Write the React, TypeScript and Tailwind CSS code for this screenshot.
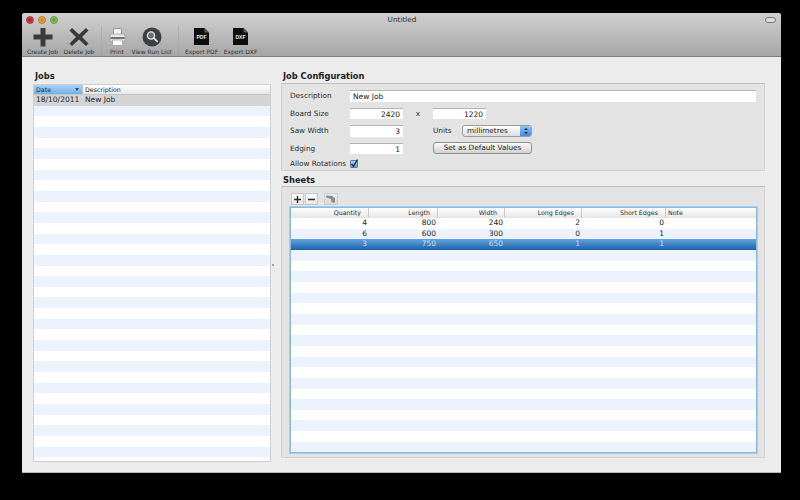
const font = "font-['DejaVu_Sans','Liberation_Sans',sans-serif]";
const sheetCols = "grid grid-cols-[78px_69px_67px_77px_84px_1fr]";

const sheets = [
  [4, 800, 240, 2, 0],
  [6, 600, 300, 0, 1],
  [3, 750, 650, 1, 1],
];

function PlusIcon() {
  return (
    <svg width="20" height="20" viewBox="0 0 20 20">
      <path d="M7.500 1h5v6.500H19.500V12.500H12.500v7h-5v-7H.5V7.500h7z" fill="#3a3b3c" />
    </svg>
  );
}

function CrossIcon() {
  return (
    <svg width="20" height="20" viewBox="0 0 20 20">
      <path d="M3 1l7 6.500L17 1l2.500 2.500L13 10l6.500 6.500L17 19l-7-6.500L3 19 .5 16.500 7 10 .5 3.500z" fill="#37393a" />
    </svg>
  );
}

function PrintIcon() {
  return (
    <svg width="17" height="20" viewBox="0 0 17 20">
      <path d="M4.500 1.500h8v6h-8z" fill="#f2f2f2" stroke="#8a8a8a" strokeWidth=".8" />
      <rect x="1" y="7" width="15" height="7.500" rx="2" fill="#e4e6e8" stroke="#9a9a9a" strokeWidth=".7" />
      <path d="M1.500 11h14" stroke="#4c4f52" strokeWidth="1.600" />
      <path d="M3.500 13h10v5.500h-10z" fill="#fafafa" stroke="#9a9a9a" strokeWidth=".7" />
    </svg>
  );
}

function SearchIcon() {
  return (
    <svg width="20" height="20" viewBox="0 0 20 20">
      <circle cx="10" cy="10" r="9.500" fill="#3d3f40" />
      <circle cx="9" cy="8.500" r="3.600" fill="#6d7072" stroke="#e8e8e8" strokeWidth="1.300" />
      <path d="M11.800 11.200l3.400 3.200" stroke="#e8e8e8" strokeWidth="1.800" strokeLinecap="round" />
    </svg>
  );
}

function DocIcon({ label }: { label: string }) {
  return (
    <svg width="15" height="17" viewBox="0 0 15 17">
      <path d="M0 0h10.500L15 4.500V17H0z" fill="#0d0d0d" />
      <path d="M10.500 0v4.500H15z" fill="#5a5a5a" />
      <text x="7.500" y="10.500" textAnchor="middle" fontSize="5" fontWeight="700" fill="#e6e6e6" fontFamily="Liberation Sans, sans-serif">
        {label}
      </text>
    </svg>
  );
}

function ToolItem({ label, width, children }: { label: string; width: string; children: React.ReactNode }) {
  return (
    <div className={`flex flex-col items-center shrink-0 ${width}`}>
      <div className="h-[21px] flex items-center justify-center">{children}</div>
      <span className="mt-[1px] text-[6px] leading-[8px] text-[#333] whitespace-nowrap">{label}</span>
    </div>
  );
}

function Field({ value, left }: { value: string; left?: boolean }) {
  return (
    <div className={`h-[11.500px] bg-white border-t border-[#b4b4b4] px-[3px] text-[7.500px] leading-[11px] text-[#222] ${left ? "" : "text-right"}`}>
      {value}
    </div>
  );
}

function Label({ children }: { children: React.ReactNode }) {
  return <div className="h-[11.500px] text-[7.300px] leading-[11.500px] text-[#2a2a2a] whitespace-nowrap">{children}</div>;
}

function Stripes({ count }: { count: number }) {
  return (
    <>
      {Array.from({ length: count }, (_, i) => (
        <div key={i} className={`h-[10.670px] shrink-0 ${i % 2 === 0 ? "bg-[#edf3fe]" : "bg-white"}`} />
      ))}
    </>
  );
}

function Separator() {
  return <div className="w-px h-[31px] bg-[#a0a0a0]/50 shrink-0" />;
}

export default function App() {
  return (
    <div className={`w-[800px] h-[500px] bg-black overflow-hidden pl-[22px] pt-[13px] ${font}`}>
      <div className="w-[759px] h-[460px] flex flex-col bg-[#ececec] rounded-t-[3px] overflow-hidden border-b border-[#b8b8b8]">
        {/* title bar + toolbar */}
        <div className="h-[44px] shrink-0 bg-gradient-to-b from-[#d0d0d0] to-[#a6a6a6] border-b border-[#7f7f7f]">
          <div className="h-[13px] flex items-center pl-[4px] pr-[5px]">
            <div className="flex gap-[4px] w-[60px]">
              <span className="w-[8px] h-[8px] rounded-full border border-[#a33] bg-[radial-gradient(circle,#a8252c_25%,#e2636a_100%)]" />
              <span className="w-[8px] h-[8px] rounded-full border border-[#b87a2a] bg-[radial-gradient(circle,#d98a2b_25%,#f3c06d_100%)]" />
              <span className="w-[8px] h-[8px] rounded-full border border-[#5c9a3c] bg-[radial-gradient(circle,#5fa83f_25%,#a5dc82_100%)]" />
            </div>
            <div className="flex-1 text-center text-[7.300px] leading-[10px] text-[#2e2e2e] pr-[47px]">Untitled</div>
            <div className="w-[11px] h-[6px] rounded-[3px] border border-[#777] bg-[#dcdcdc]" />
          </div>
          <div className="flex items-start pl-[5px] h-[30px]">
            <ToolItem label="Create Job" width="w-[31px]"><PlusIcon /></ToolItem>
            <div className="w-[6px] shrink-0" />
            <ToolItem label="Delete Job" width="w-[30px]"><CrossIcon /></ToolItem>
            <div className="w-[7px] shrink-0" />
            <Separator />
            <div className="w-[7px] shrink-0" />
            <ToolItem label="Print" width="w-[16px]"><PrintIcon /></ToolItem>
            <div className="w-[6px] shrink-0" />
            <ToolItem label="View Run List" width="w-[41px]"><SearchIcon /></ToolItem>
            <div className="w-[6px] shrink-0" />
            <Separator />
            <div className="w-[6px] shrink-0" />
            <ToolItem label="Export PDF" width="w-[33px]"><DocIcon label="PDF" /></ToolItem>
            <div className="w-[6px] shrink-0" />
            <ToolItem label="Export DXF" width="w-[33px]"><DocIcon label="DXF" /></ToolItem>
          </div>
        </div>

        {/* body */}
        <div className="flex-1 min-h-0 flex pl-[11px] pt-[14px]">
          {/* jobs list */}
          <div className="w-[238px] shrink-0 flex flex-col">
            <div className="h-[11px] pl-[2px] text-[8.300px] leading-[11px] font-bold text-[#1c1c1c]">Jobs</div>
            <div className="mt-[2px] h-[378px] flex flex-col overflow-hidden bg-white border border-[#cfcfcf]">
              <div className="h-[10px] shrink-0 flex text-[6.300px] leading-[10px] text-[#2a2a2a] bg-gradient-to-b from-white to-[#e6e6e6] border-b border-[#c4c4c4]">
                <div className="w-[48px] px-[2px] flex justify-between items-center bg-gradient-to-b from-[#a9d2f5] to-[#6fb0ea]">
                  Date
                  <span className="w-0 h-0 border-x-[2.500px] border-x-transparent border-t-[3px] border-t-[#2a4a6a] mr-[1px]" />
                </div>
                <div className="pl-[2px] border-l border-[#c4c4c4]">Description</div>
              </div>
              <div className="h-[10.670px] shrink-0 flex bg-[#d4d4d4] text-[7.500px] leading-[10.500px] text-[#222]">
                <div className="w-[49px] pl-[2px]">18/10/2011</div>
                <div className="pl-[2px]">New Job</div>
              </div>
              <Stripes count={35} />
            </div>
          </div>

          {/* split handle */}
          <div className="w-[10px] shrink-0 flex items-center pl-[1px] pb-[14px]">
            <span className="w-[2px] h-[2px] rounded-full bg-[#8c8c8c]" />
          </div>

          {/* right column */}
          <div className="w-[484px] shrink-0 flex flex-col">
            <div className="h-[11px] pl-[2px] text-[8.300px] leading-[11px] font-bold text-[#1c1c1c] whitespace-nowrap">Job Configuration</div>
            <div className="mt-[1px] h-[88px] shrink-0 bg-[#e3e3e3] border border-[#d2d2d2] border-t-[#bdbdbd] pt-[6px] pl-[8px] pr-[8px]">
              <div className="grid grid-cols-[60px_53px_30px_1fr] auto-rows-[11.500px] gap-y-[6px] items-center">
                <Label>Description</Label>
                <div className="col-span-3">
                  <Field value="New Job" left />
                </div>

                <Label>Board Size</Label>
                <Field value="2420" />
                <div className="text-center text-[7.300px] leading-[11.500px] text-[#2a2a2a]">x</div>
                <div className="w-[53px]">
                  <Field value="1220" />
                </div>

                <Label>Saw Width</Label>
                <Field value="3" />
                <div />
                <div className="flex items-center">
                  <div className="w-[29px] text-[7.300px] leading-[11px] text-[#2a2a2a]">Units</div>
                  <div className="w-[70px] h-[12px] flex rounded-[3px] overflow-hidden border border-[#9d9d9d] bg-gradient-to-b from-white to-[#dcdcdc]">
                    <div className="flex-1 pl-[4px] text-[7.300px] leading-[10px] text-[#222]">millimetres</div>
                    <div className="w-[11px] flex flex-col items-center justify-center gap-[1.500px] bg-gradient-to-b from-[#8cc4f4] to-[#3d8ae0]">
                      <span className="w-0 h-0 border-x-[2px] border-x-transparent border-b-[2.500px] border-b-[#12233a]" />
                      <span className="w-0 h-0 border-x-[2px] border-x-transparent border-t-[2.500px] border-t-[#12233a]" />
                    </div>
                  </div>
                </div>

                <Label>Edging</Label>
                <Field value="1" />
                <div />
                <div className="w-[99px] h-[12px] rounded-[3px] border border-[#8f8f8f] bg-gradient-to-b from-[#fbfbfb] to-[#d2d2d2] text-center text-[7.300px] leading-[10px] text-[#222] whitespace-nowrap">
                  Set as Default Values
                </div>
              </div>
              <div className="flex items-center mt-[4.500px]">
                <div className="w-[60px] text-[7.300px] leading-[10px] text-[#2a2a2a] whitespace-nowrap">Allow Rotations</div>
                <div className="w-[8px] h-[8px] flex items-center justify-center rounded-[1px] border border-[#5f7f9f] bg-gradient-to-b from-[#a9cdf0] to-[#6da6de]">
                  <svg width="8" height="8" viewBox="0 0 8 8" className="overflow-visible">
                    <path d="M1.500 3.800l2 2.500L7.500 -.5" fill="none" stroke="#16263a" strokeWidth="1.300" />
                  </svg>
                </div>
              </div>
            </div>

            <div className="mt-[4px] h-[11px] pl-[2px] text-[8.300px] leading-[11px] font-bold text-[#1c1c1c]">Sheets</div>
            <div className="h-[272px] shrink-0 bg-[#e3e3e3] border border-[#d2d2d2] border-t-[#bdbdbd] pt-[6px] pl-[8px] pr-[7px] flex flex-col">
              <div className="h-[12px] shrink-0 flex pl-[1px]">
                <div className="w-[13px] flex items-center justify-center bg-gradient-to-b from-white to-[#e8e8e8] border border-[#c8c8c8]">
                  <svg width="7" height="7" viewBox="0 0 7 7"><path d="M3.500 0v7M0 3.500h7" stroke="#2b2b2b" strokeWidth="1.400" /></svg>
                </div>
                <div className="w-[13px] ml-[1px] flex items-center justify-center bg-gradient-to-b from-white to-[#e8e8e8] border border-[#c8c8c8]">
                  <svg width="7" height="7" viewBox="0 0 7 7"><path d="M0 3.500h7" stroke="#2b2b2b" strokeWidth="1.400" /></svg>
                </div>
                <div className="w-[14px] ml-[6px] flex items-center justify-center bg-gradient-to-b from-[#ececec] to-[#d8d8d8] border border-[#cccccc]">
                  <svg width="10" height="8" viewBox="0 0 10 8">
                    <path d="M0 .5l6 .5 3 2.500V7.500H5.500L5 4 0 2.500z" fill="#8a8a8a" />
                  </svg>
                </div>
              </div>
              <div className="mt-[2px] h-[246px] shrink-0 flex flex-col overflow-hidden bg-white border border-[#8bb9de] ring-1 ring-[#a9cde9]">
                <div className={`${sheetCols} h-[10px] shrink-0 text-[6.300px] leading-[10px] text-[#2a2a2a] bg-gradient-to-b from-white to-[#e6e6e6]`}>
                  {["Quantity", "Length", "Width", "Long Edges", "Short Edges"].map((h) => (
                    <div key={h} className="text-right pr-[7px] border-r border-[#cacaca]">{h}</div>
                  ))}
                  <div className="pl-[2px]">Note</div>
                </div>
                {sheets.map((row, i) => (
                  <div
                    key={i}
                    className={`${sheetCols} h-[10.670px] shrink-0 text-[7.500px] leading-[10.500px] ${
                      i === 2
                        ? "bg-gradient-to-b from-[#62a4dc] to-[#1a62ad] text-[#c9def2]"
                        : i === 1
                          ? "bg-[#edf3fe] text-[#222]"
                          : "bg-white text-[#222]"
                    }`}
                  >
                    {row.map((v, j) => (
                      <div key={j} className="text-right pr-[2px]">{v}</div>
                    ))}
                  </div>
                ))}
                <Stripes count={20} />
              </div>
            </div>
          </div>
        </div>
      </div>
    </div>
  );
}
